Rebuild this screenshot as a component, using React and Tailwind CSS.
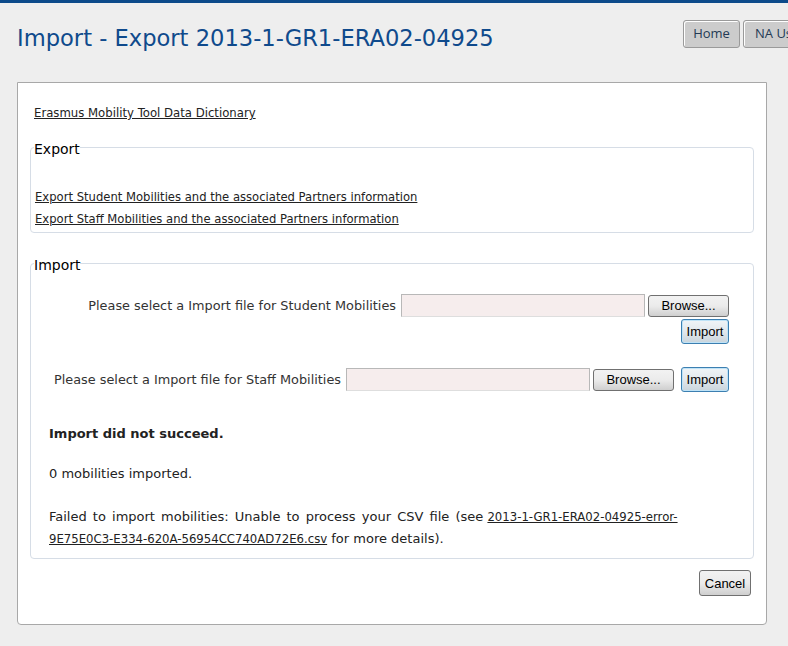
import React from "react";

const winBtn =
  "rounded-[3px] border border-[#707070] bg-gradient-to-b from-[#f2f2f2] via-[#ebebeb] to-[#cfcfcf] text-[13px] text-black leading-none";
const winBtnFocus =
  "rounded-[3px] border border-[#3c7fb1] bg-gradient-to-b from-[#f0f4f7] via-[#e2e8ed] to-[#c9d4dc] text-[13px] text-black leading-none shadow-[inset_0_0_0_1px_#bfe3f7]";

const btnFont = { fontFamily: "'Liberation Sans', Arial, sans-serif" };

const FileRow = ({ label, wrap }) => (
  <div className="flex flex-col items-end">
    <div className="flex items-center">
      <span className="mr-[5px] text-[12.85px] text-[#333]">{label}</span>
      <div className="h-[23px] w-[244px] border border-[#b8b8b8] border-b-[#dedede] bg-[#f6eded]" />
      <button className={`${winBtn} ml-[3px] h-[22px] w-[81px]`} style={btnFont}>
        Browse...
      </button>
      {!wrap && (
        <button className={`${winBtnFocus} ml-[7px] h-[25px] w-[48px]`} style={btnFont}>
          Import
        </button>
      )}
    </div>
    {wrap && (
      <button className={`${winBtnFocus} mt-[2px] h-[25px] w-[48px]`} style={btnFont}>
        Import
      </button>
    )}
  </div>
);

export default function App() {
  return (
    <div
      className="min-h-[646px] overflow-hidden bg-[#eeeeee] border-t-[3px] border-[#0c4a8a]"
      style={{ fontFamily: "'DejaVu Sans', Verdana, sans-serif" }}
    >
      {/* Header */}
      <div className="relative h-[79px]">
        <h1 className="absolute left-[17px] top-[19px] text-[22.6px] font-normal text-[#0f4a8c]">
          Import - Export 2013-1-GR1-ERA02-04925
        </h1>
        <div className="absolute left-[683px] top-[17px] flex gap-[3px]" style={{ fontFamily: "'Open Sans', sans-serif" }}>
          <button className="h-[28px] w-[57px] rounded-[3px] border border-[#9a9a9a] bg-[#cccccc] text-[13px] text-[#233a55] shadow-[inset_1px_1px_0_#fff]">
            Home
          </button>
          <button className="h-[28px] w-[90px] rounded-[3px] border border-[#9a9a9a] bg-[#cccccc] text-left pl-[11px] text-[13px] text-[#233a55] shadow-[inset_1px_1px_0_#fff] whitespace-nowrap">
            NA Users
          </button>
        </div>
      </div>

      {/* Main panel */}
      <div className="ml-[17px] w-[750px] h-[543px] rounded-b-[4px] border border-[#a8a8a8] bg-white px-[12px] pt-[17px]">
        <a className="ml-[4px] text-[11.7px] text-[#222] underline">Erasmus Mobility Tool Data Dictionary</a>

        <fieldset className="mt-[11px] h-[98px] rounded-[4px] border border-[#d6dde6]">
          <legend className="ml-[3px] pt-[4px] text-[14px] text-black">Export</legend>
          <div className="mt-[29px] flex flex-col gap-[5px] pl-[4px] text-[11.6px] text-[#222]">
            <a className="underline">Export Student Mobilities and the associated Partners information</a>
            <a className="underline">Export Staff Mobilities and the associated Partners information</a>
          </div>
        </fieldset>

        <fieldset className="mt-[18px] h-[308px] rounded-[4px] border border-[#d6dde6]">
          <legend className="ml-[3px] pt-[4px] text-[14px] text-black">Import</legend>
          <div className="pl-[18px] pr-[24px]">
            <div className="mt-[18px]">
              <FileRow label="Please select a Import file for Student Mobilities" wrap />
            </div>
            <div className="mt-[23px]">
              <FileRow label="Please select a Import file for Staff Mobilities" />
            </div>
            <div className="mt-[32px] text-[13px] text-[#222]">
              <p className="font-bold">Import did not succeed.</p>
              <p className="mt-[20px]">0 mobilities imported.</p>
              <p className="mt-[23px] leading-[21px]">
                <span className="[word-spacing:2px]">Failed to import mobilities: Unable to process your CSV file (see</span>{" "}
                <a className="text-[11.7px] underline">
                  2013-1-GR1-ERA02-04925-error-
                  <br />
                  9E75E0C3-E334-620A-56954CC740AD72E6.csv
                </a>{" "}
                for more details).
              </p>
            </div>
          </div>
        </fieldset>

        <div className="mt-[11px] flex justify-end pr-[3px]">
          <button className={`${winBtn} h-[26px] w-[52px]`} style={btnFont}>
            Cancel
          </button>
        </div>
      </div>
    </div>
  );
}
